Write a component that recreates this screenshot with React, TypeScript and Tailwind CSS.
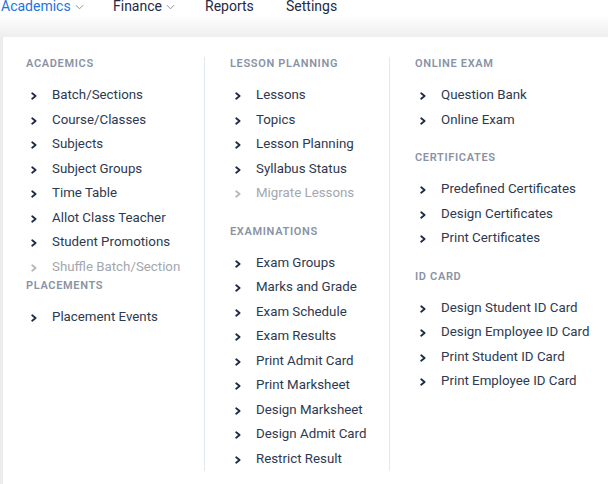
import React from 'react';

type Item = { label: string; disabled?: boolean };
type Section = { title: string; items: Item[]; tight?: boolean };

const columns: Section[][] = [
  [
    {
      title: 'Academics',
      items: [
        { label: 'Batch/Sections' },
        { label: 'Course/Classes' },
        { label: 'Subjects' },
        { label: 'Subject Groups' },
        { label: 'Time Table' },
        { label: 'Allot Class Teacher' },
        { label: 'Student Promotions' },
        { label: 'Shuffle Batch/Section', disabled: true },
      ],
    },
    { title: 'Placements', tight: true, items: [{ label: 'Placement Events' }] },
  ],
  [
    {
      title: 'Lesson Planning',
      items: [
        { label: 'Lessons' },
        { label: 'Topics' },
        { label: 'Lesson Planning' },
        { label: 'Syllabus Status' },
        { label: 'Migrate Lessons', disabled: true },
      ],
    },
    {
      title: 'Examinations',
      items: [
        { label: 'Exam Groups' },
        { label: 'Marks and Grade' },
        { label: 'Exam Schedule' },
        { label: 'Exam Results' },
        { label: 'Print Admit Card' },
        { label: 'Print Marksheet' },
        { label: 'Design Marksheet' },
        { label: 'Design Admit Card' },
        { label: 'Restrict Result' },
      ],
    },
  ],
  [
    {
      title: 'Online Exam',
      items: [{ label: 'Question Bank' }, { label: 'Online Exam' }],
    },
    {
      title: 'Certificates',
      items: [
        { label: 'Predefined Certificates' },
        { label: 'Design Certificates' },
        { label: 'Print Certificates' },
      ],
    },
    {
      title: 'ID Card',
      items: [
        { label: 'Design Student ID Card' },
        { label: 'Design Employee ID Card' },
        { label: 'Print Student ID Card' },
        { label: 'Print Employee ID Card' },
      ],
    },
  ],
];

function Chevron({ muted }: { muted?: boolean }) {
  return (
    <svg
      viewBox="0 0 6 8"
      className={`w-[6px] h-[8px] shrink-0 mt-[2px] ${muted ? 'text-[#b4b8bf]' : 'text-[#1f2a44]'}`}
      fill="none"
      stroke="currentColor"
      strokeWidth="1.8"
      strokeLinecap="round"
      strokeLinejoin="round"
    >
      <path d="M1.2 1.2 L4.6 4 L1.2 6.8" />
    </svg>
  );
}

function CaretDown() {
  return (
    <svg viewBox="0 0 10 6" className="w-[9px] h-[6px] mt-[8px] ml-[4px] text-[#8a93a3]" fill="none" stroke="currentColor" strokeWidth="1.1">
      <path d="M1 1 L5 5 L9 1" />
    </svg>
  );
}

function MenuSection({ section, first }: { section: Section; first: boolean }) {
  return (
    <div className={first ? '' : section.tight ? '' : 'mt-[19px]'}>
      <div className="text-[11px] leading-[14px] font-semibold tracking-[0.06em] uppercase text-[#8a93a4]">
        {section.title}
      </div>
      <ul className="mt-[12px]">
        {section.items.map((item) => (
          <li key={item.label} className="h-[24.5px] flex items-center pl-[5px]">
            <Chevron muted={item.disabled} />
            <span
              className={`ml-[15px] text-[13.3px] leading-[20px] whitespace-nowrap ${
                item.disabled ? 'text-[#a3a7ae]' : 'text-[#2d3950]'
              }`}
            >
              {item.label}
            </span>
          </li>
        ))}
      </ul>
    </div>
  );
}

export default function App() {
  return (
    <div className="w-[608px] h-[484px] overflow-hidden bg-white font-['Roboto',sans-serif]">
      <nav className="h-[37px] bg-gradient-to-b from-white from-40% to-[#eeeeee] flex items-start pl-[1px] text-[14px] leading-[20px] text-[#1f2a44]">
        <div className="flex items-start -mt-[4px] w-[112px]">
          <span className="text-[#1c73e2]">Academics</span>
          <CaretDown />
        </div>
        <div className="flex items-start -mt-[4px] w-[92px]">
          <span>Finance</span>
          <CaretDown />
        </div>
        <span className="-mt-[4px] w-[81px]">Reports</span>
        <span className="-mt-[4px]">Settings</span>
      </nav>

      <div className="flex h-[447px]">
        <div className="w-[3px] bg-[#ececec]" />
        <div className="flex-1 bg-white rounded-tl-[8px] pt-[20px] pl-[23px]">
          <div className="flex">
            {columns.map((col, i) => (
              <div
                key={i}
                className={
                  i === 0
                    ? 'w-[179px] border-r border-[#e3e7ee]'
                    : i === 1
                      ? 'w-[185px] pl-[25px] border-r border-[#e3e7ee]'
                      : 'pl-[25px]'
                }
              >
                {col.map((section, j) => (
                  <MenuSection key={section.title} section={section} first={j === 0} />
                ))}
              </div>
            ))}
          </div>
        </div>
      </div>
    </div>
  );
}
